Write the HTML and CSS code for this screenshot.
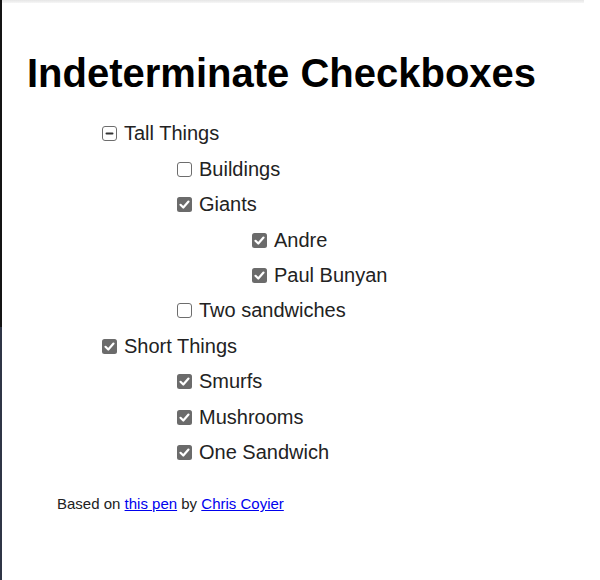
FILE: index.html
```html
<!DOCTYPE html>
<html lang="en">
<head>
<meta charset="utf-8">
<title>Indeterminate Checkboxes</title>
<link rel="stylesheet" href="styles.css">
</head>
<body>
<div class="frame">
  <div class="edge"></div>
  <div class="content">
    <div class="topline"></div>
    <main class="page">
      <h1 class="title">Indeterminate Checkboxes</h1>
      <ul class="tree">
        <li>
          <label class="item"><svg class="box" viewBox="0 0 15 15"><rect class="box-empty" x="0.5" y="0.5" width="14" height="14" rx="2.5"/><line class="dash" x1="4.5" y1="7.5" x2="10.5" y2="7.5"/></svg>Tall Things</label>
          <ul class="tree-sub">
            <li><label class="item"><svg class="box" viewBox="0 0 15 15"><rect class="box-empty" x="0.5" y="0.5" width="14" height="14" rx="2.5"/></svg>Buildings</label></li>
            <li>
              <label class="item"><svg class="box" viewBox="0 0 15 15"><rect class="box-fill" x="0" y="0" width="15" height="15" rx="2.5"/><polyline class="tick" points="3.5,7.8 6.3,10.5 11.5,4.6"/></svg>Giants</label>
              <ul class="tree-sub">
                <li><label class="item"><svg class="box" viewBox="0 0 15 15"><rect class="box-fill" x="0" y="0" width="15" height="15" rx="2.5"/><polyline class="tick" points="3.5,7.8 6.3,10.5 11.5,4.6"/></svg>Andre</label></li>
                <li><label class="item"><svg class="box" viewBox="0 0 15 15"><rect class="box-fill" x="0" y="0" width="15" height="15" rx="2.5"/><polyline class="tick" points="3.5,7.8 6.3,10.5 11.5,4.6"/></svg>Paul Bunyan</label></li>
              </ul>
            </li>
            <li><label class="item"><svg class="box" viewBox="0 0 15 15"><rect class="box-empty" x="0.5" y="0.5" width="14" height="14" rx="2.5"/></svg>Two sandwiches</label></li>
          </ul>
        </li>
        <li>
          <label class="item"><svg class="box" viewBox="0 0 15 15"><rect class="box-fill" x="0" y="0" width="15" height="15" rx="2.5"/><polyline class="tick" points="3.5,7.8 6.3,10.5 11.5,4.6"/></svg>Short Things</label>
          <ul class="tree-sub">
            <li><label class="item"><svg class="box" viewBox="0 0 15 15"><rect class="box-fill" x="0" y="0" width="15" height="15" rx="2.5"/><polyline class="tick" points="3.5,7.8 6.3,10.5 11.5,4.6"/></svg>Smurfs</label></li>
            <li><label class="item"><svg class="box" viewBox="0 0 15 15"><rect class="box-fill" x="0" y="0" width="15" height="15" rx="2.5"/><polyline class="tick" points="3.5,7.8 6.3,10.5 11.5,4.6"/></svg>Mushrooms</label></li>
            <li><label class="item"><svg class="box" viewBox="0 0 15 15"><rect class="box-fill" x="0" y="0" width="15" height="15" rx="2.5"/><polyline class="tick" points="3.5,7.8 6.3,10.5 11.5,4.6"/></svg>One Sandwich</label></li>
          </ul>
        </li>
      </ul>
      <p class="credit">Based on <a href="#">this pen</a> by <a href="#">Chris Coyier</a></p>
    </main>
  </div>
</div>
</body>
</html>
```
FILE: styles.css
```css
html, body {
  margin: 0;
  padding: 0;
  background: #ffffff;
}

body {
  font-family: "Liberation Sans", Arial, sans-serif;
  color: #222222;
}

.frame {
  display: flex;
  min-height: 580px;
}

.edge {
  width: 2px;
  flex: none;
  background: linear-gradient(to bottom, #141414 0, #141414 327px, #2f3546 327px, #2f3546 100%);
}

.content {
  flex: 1;
  min-width: 0;
}

.topline {
  width: 582px;
  height: 3px;
  background: linear-gradient(to bottom, #e6e6e6, #f6f6f6);
}

.page {
  padding-left: 25px;
}

.title {
  margin: 47px 0 0;
  font-size: 40px;
  font-weight: 700;
  line-height: 46px;
  color: #000000;
}

.tree {
  list-style: none;
  margin: 20px 0 0 75px;
  padding: 0;
}

.tree-sub {
  list-style: none;
  margin: 0;
  padding: 0 0 0 75px;
}

.item {
  display: flex;
  align-items: center;
  height: 35.45px;
  font-size: 20px;
}

.box {
  width: 15px;
  height: 15px;
  flex: none;
  margin-right: 7px;
}

.box-empty {
  fill: #ffffff;
  stroke: #6d6d6d;
  stroke-width: 1;
}

.box-fill {
  fill: #6b6b6b;
}

.tick {
  fill: none;
  stroke: #ffffff;
  stroke-width: 2.2;
  stroke-linecap: round;
  stroke-linejoin: round;
}

.dash {
  stroke: #333333;
  stroke-width: 2;
  stroke-linecap: round;
}

.credit {
  margin: 25px 0 0 30px;
  font-size: 15px;
  line-height: 17px;
}

.credit a {
  color: #0000ee;
}
```
